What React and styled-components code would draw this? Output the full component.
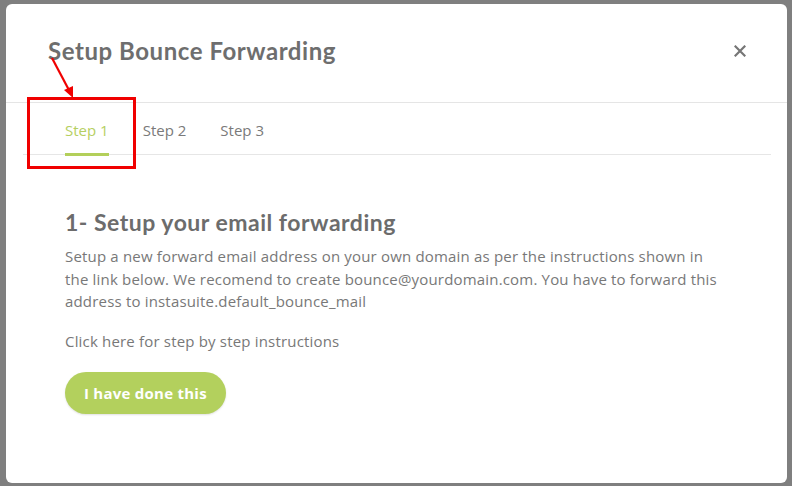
import React, { useState } from "react";
import styled, { createGlobalStyle } from "styled-components";

const Global = createGlobalStyle`
  html, body { margin: 0; padding: 0; }
  body { font-family: "Open Sans", "Liberation Sans", sans-serif; }
  * { box-sizing: border-box; }
`;

const Backdrop = styled.div`
  width: 792px;
  height: 486px;
  background: #7f7f7f;
  padding: 4px 5px 3px 6px;
  position: relative;
  overflow: hidden;
`;

const Modal = styled.div`
  width: 100%;
  height: 100%;
  background: #ffffff;
  border-radius: 6px;
  display: flex;
  flex-direction: column;
`;

const Header = styled.div`
  display: flex;
  align-items: center;
  justify-content: space-between;
  padding: 32px 40px 36px 42px;
  border-bottom: 1px solid #e5e5e5;
`;

const Title = styled.h2`
  margin: 0;
  font-family: "Lato", "Open Sans", sans-serif;
  font-weight: 700;
  font-size: 24px;
  line-height: 30px;
  color: #6e6e6e;
  letter-spacing: 0.55px;
`;

const Close = styled.button`
  border: 0;
  background: none;
  padding: 0;
  width: 14px;
  height: 14px;
  display: flex;
  align-items: center;
  justify-content: center;
  cursor: pointer;
`;

const Body = styled.div`
  padding: 0 16px 0 17px;
  display: flex;
  flex-direction: column;
`;

const TabList = styled.div`
  display: flex;
  gap: 34px;
  padding-left: 42px;
  border-bottom: 1px solid #e6e6e6;
`;

const Tab = styled.button`
  border: 0;
  background: none;
  font-family: "Open Sans", sans-serif;
  font-size: 15px;
  line-height: 22px;
  padding: 16px 0 12px;
  margin-bottom: -2px;
  color: ${(p) => (p.$active ? "#b6cf62" : "#7a7a7a")};
  border-bottom: 3px solid ${(p) => (p.$active ? "#b3cf5a" : "transparent")};
  cursor: pointer;
`;

const Content = styled.div`
  padding: 53px 0 0 42px;
  max-width: 710px;
`;

const Heading = styled.h3`
  margin: 0;
  font-family: "Lato", "Open Sans", sans-serif;
  font-weight: 700;
  font-size: 23px;
  line-height: 28px;
  letter-spacing: 0.5px;
  color: #6c6c6c;
`;

const Para = styled.p`
  margin: ${(p) => p.$mt || "0"} 0 0;
  font-size: 15px;
  line-height: 22.5px;
  letter-spacing: 0.18px;
  color: #787878;
  max-width: 660px;
`;

const DoneButton = styled.button`
  margin-top: 20px;
  height: 42px;
  padding: 0 19px;
  border: 0;
  border-radius: 21px;
  background: #b3d05d;
  color: #ffffff;
  font-family: "Open Sans", sans-serif;
  font-weight: 700;
  font-size: 15px;
  letter-spacing: 0.25px;
  cursor: pointer;
  box-shadow: 0 1px 2px rgba(0, 0, 0, 0.12);
`;

const HighlightBox = styled.div`
  position: absolute;
  left: 27px;
  top: 97px;
  width: 109px;
  height: 72px;
  border: 3px solid #f00000;
  pointer-events: none;
`;

const Arrow = styled.svg`
  position: absolute;
  left: 40px;
  top: 50px;
  pointer-events: none;
`;

export default function App() {
  const [active, setActive] = useState(0);
  const tabs = ["Step 1", "Step 2", "Step 3"];
  return (
    <>
      <Global />
      <Backdrop>
        <Modal>
          <Header>
            <Title>Setup Bounce Forwarding</Title>
            <Close aria-label="Close">
              <svg width="12" height="12" viewBox="0 0 12 12">
                <path d="M1.5 1.5 L10.5 10.5 M10.5 1.5 L1.5 10.5" stroke="#767676" strokeWidth="2.2" strokeLinecap="square" />
              </svg>
            </Close>
          </Header>
          <Body>
            <TabList>
              {tabs.map((t, i) => (
                <Tab key={t} $active={i === active} onClick={() => setActive(i)}>
                  {t}
                </Tab>
              ))}
            </TabList>
            <Content>
              <Heading>1- Setup your email forwarding</Heading>
              <Para $mt="9px">
                Setup a new forward email address on your own domain as per the instructions shown in the link below. We recomend to create bounce@yourdomain.com. You have to forward this address to instasuite.default_bounce_mail
              </Para>
              <Para $mt="17px">Click here for step by step instructions</Para>
              <DoneButton>I have done this</DoneButton>
            </Content>
          </Body>
        </Modal>
        <HighlightBox />
        <Arrow width="40" height="52" viewBox="0 0 40 52">
          <line x1="12" y1="8" x2="30" y2="42" stroke="#f00000" strokeWidth="2.2" />
          <polygon points="33,48 24,40 33,36" fill="#f00000" />
        </Arrow>
      </Backdrop>
    </>
  );
}
